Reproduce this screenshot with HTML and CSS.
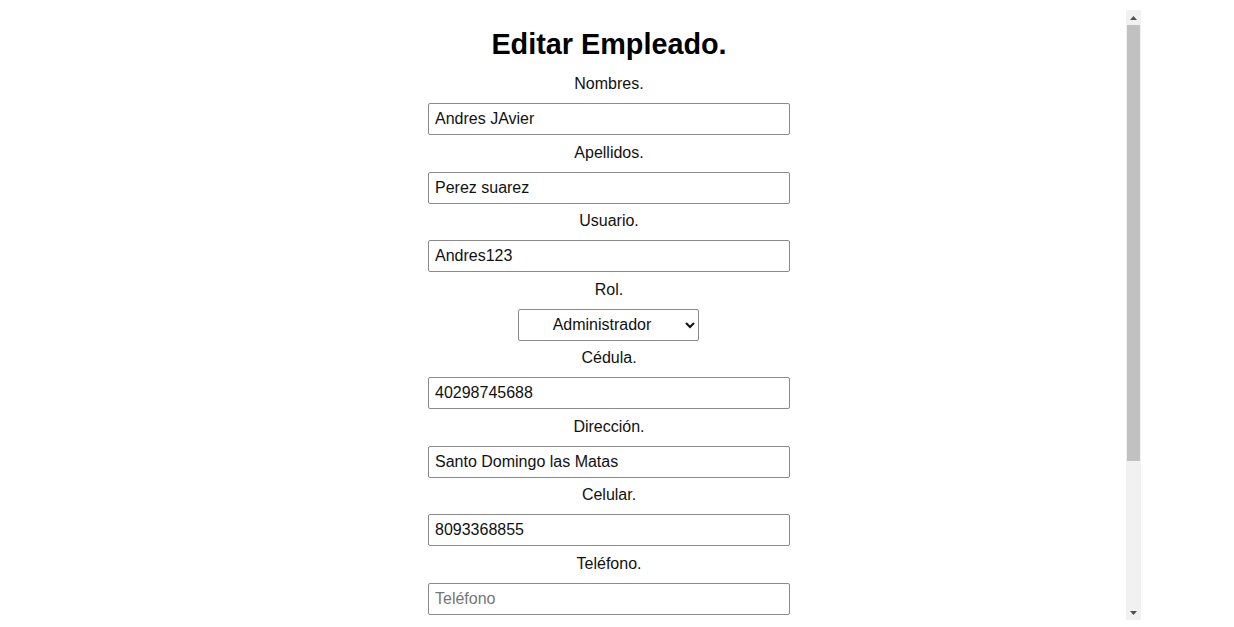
FILE: index.html
```html
<!DOCTYPE html>
<html lang="es">
<head>
<meta charset="utf-8">
<title>Editar Empleado</title>
<link rel="stylesheet" href="styles.css">
</head>
<body>
<div class="screen">
  <main class="page">
    <form class="form">
      <h2 class="title">Editar Empleado.</h2>
      <label class="label" for="nombres">Nombres.</label>
      <input class="field" id="nombres" type="text" value="Andres JAvier">
      <label class="label" for="apellidos">Apellidos.</label>
      <input class="field" id="apellidos" type="text" value="Perez suarez">
      <label class="label" for="usuario">Usuario.</label>
      <input class="field" id="usuario" type="text" value="Andres123">
      <label class="label" for="rol">Rol.</label>
      <select class="select" id="rol">
        <option>Administrador</option>
        <option>Empleado</option>
      </select>
      <label class="label" for="cedula">Cédula.</label>
      <input class="field" id="cedula" type="text" value="40298745688">
      <label class="label" for="direccion">Dirección.</label>
      <input class="field" id="direccion" type="text" value="Santo Domingo las Matas">
      <label class="label" for="celular">Celular.</label>
      <input class="field" id="celular" type="text" value="8093368855">
      <label class="label" for="telefono">Teléfono.</label>
      <input class="field" id="telefono" type="text" placeholder="Teléfono">
    </form>
  </main>
  <div class="scrollbar">
    <div class="sb-btn"><svg width="7" height="4" viewBox="0 0 7 4"><path d="M0 4 L3.5 0 L7 4 Z" fill="#505050"/></svg></div>
    <div class="sb-track">
      <div class="sb-thumb"></div>
    </div>
    <div class="sb-btn"><svg width="7" height="4" viewBox="0 0 7 4"><path d="M0 0 L7 0 L3.5 4 Z" fill="#505050"/></svg></div>
  </div>
</div>
</body>
</html>
```

FILE: styles.css
```css
html, body {
  margin: 0;
  padding: 0;
  background: #ffffff;
}
body {
  font-family: "Liberation Sans", Arial, sans-serif;
  color: #111111;
  overflow: hidden;
}
.screen {
  display: flex;
  align-items: flex-start;
  width: 1234px;
  height: 627px;
}
.page {
  width: 1034px;
  padding-left: 92px;
  display: flex;
  justify-content: center;
  height: 627px;
  overflow: hidden;
}
.form {
  width: 362px;
  display: flex;
  flex-direction: column;
  align-items: center;
  padding-top: 28px;
}
.title {
  margin: 0 0 14px;
  font-size: 28.8px;
  font-weight: bold;
  line-height: 33px;
  color: #000000;
}
.label {
  display: block;
  font-size: 16px;
  line-height: 18px;
  margin-bottom: 10px;
  color: #111111;
}
.field {
  box-sizing: border-box;
  width: 362px;
  height: 32px;
  margin: 0 0 8.57px;
  padding: 0 6px;
  border: 1px solid #8a8a8a;
  border-radius: 2px;
  font-family: "Liberation Sans", Arial, sans-serif;
  font-size: 16px;
  color: #111111;
  background: #ffffff;
}
.field::placeholder {
  color: #767676;
}
.select {
  box-sizing: border-box;
  width: 181px;
  height: 32px;
  margin: 0 2px 8.57px 0;
  border: 1px solid #8a8a8a;
  border-radius: 2px;
  font-family: "Liberation Sans", Arial, sans-serif;
  font-size: 16px;
  color: #111111;
  background: #ffffff;
  text-align: center;
  text-align-last: center;
}
.scrollbar {
  margin-top: 10px;
  width: 15px;
  height: 610px;
  background: #f1f1f1;
  display: flex;
  flex-direction: column;
}
.sb-btn {
  height: 15px;
  display: flex;
  align-items: center;
  justify-content: center;
  flex: none;
}
.sb-track {
  flex: 1;
  padding: 0 1px;
}
.sb-thumb {
  height: 436px;
  background: #c1c1c1;
}
```
